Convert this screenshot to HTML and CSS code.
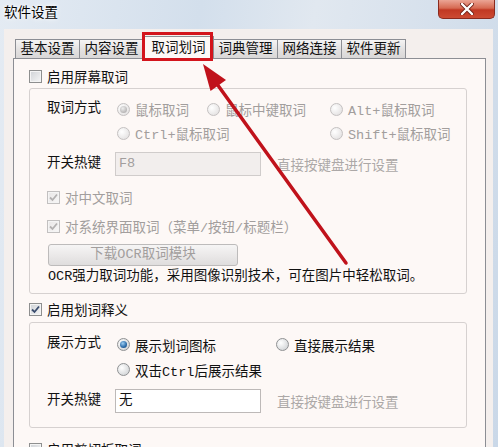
FILE: index.html
```html
<!DOCTYPE html>
<html lang="zh-CN">
<head>
    <meta charset="UTF-8">
    <title>软件设置</title>
    <link rel="stylesheet" href="styles.css">
</head>
<body>
    <div class="window">
        <div class="titlebar">
            <span class="title">软件设置</span>
            <div class="close">
                <svg width="14" height="12" viewBox="0 0 14 12">
                    <path d="M2 1 L12 11 M12 1 L2 11" stroke="#6e2118" stroke-width="4" stroke-linecap="round"/>
                    <path d="M2 1 L12 11 M12 1 L2 11" stroke="#fff" stroke-width="2.4" stroke-linecap="round"/>
                </svg>
            </div>
        </div>

        <div class="client">
            <div class="tabs">
                <div class="tab">基本设置</div>
                <div class="tab">内容设置</div>
                <div class="tab active">取词划词</div>
                <div class="tab">词典管理</div>
                <div class="tab">网络连接</div>
                <div class="tab">软件更新</div>
            </div>

            <div class="page">
                <div class="check-row">
                    <span class="cb"></span>启用屏幕取词
                </div>

                <div class="group group-screen">
                    <div class="opts">
                        <span class="lbl">取词方式</span>
                        <div class="grid grid-screen">
                            <span class="opt dis"><span class="rb dis on"></span>鼠标取词</span>
                            <span class="opt dis"><span class="rb dis"></span>鼠标中键取词</span>
                            <span class="opt dis"><span class="rb dis"></span>Alt+鼠标取词</span>
                            <span class="opt dis"><span class="rb dis"></span>Ctrl+鼠标取词</span>
                            <span></span>
                            <span class="opt dis"><span class="rb dis"></span>Shift+鼠标取词</span>
                        </div>
                    </div>
                    <div class="hotkey">
                        <span class="lbl">开关热键</span>
                        <div class="field disabled">F8</div>
                        <span class="hint">直接按键盘进行设置</span>
                    </div>
                    <div class="sub-check dis first">
                        <span class="cb dis">
                            <svg width="11" height="11" viewBox="0 0 11 11"><path d="M2 5.5 L4.5 8 L9 2.5" fill="none" stroke="#b3b1b1" stroke-width="1.8"/></svg>
                        </span>对中文取词
                    </div>
                    <div class="sub-check dis">
                        <span class="cb dis">
                            <svg width="11" height="11" viewBox="0 0 11 11"><path d="M2 5.5 L4.5 8 L9 2.5" fill="none" stroke="#b3b1b1" stroke-width="1.8"/></svg>
                        </span>对系统界面取词（菜单/按钮/标题栏）
                    </div>
                    <div class="btn">下载OCR取词模块</div>
                    <div class="desc">OCR强力取词功能，采用图像识别技术，可在图片中轻松取词。</div>
                </div>

                <div class="check-row mid">
                    <span class="cb">
                        <svg width="11" height="11" viewBox="0 0 11 11"><path d="M2 5.5 L4.5 8 L9 2.5" fill="none" stroke="#3b4d6e" stroke-width="1.8"/></svg>
                    </span>启用划词释义
                </div>

                <div class="group group-mark">
                    <div class="opts">
                        <span class="lbl">展示方式</span>
                        <div class="grid grid-mark">
                            <span class="opt"><span class="rb on"></span>展示划词图标</span>
                            <span class="opt"><span class="rb"></span>直接展示结果</span>
                            <span class="opt"><span class="rb"></span>双击Ctrl后展示结果</span>
                        </div>
                    </div>
                    <div class="hotkey">
                        <span class="lbl">开关热键</span>
                        <div class="field">无</div>
                        <span class="hint">直接按键盘进行设置</span>
                    </div>
                </div>

                <div class="check-row last">
                    <span class="cb"></span>启用剪切板取词
                </div>
            </div>
        </div>

        <div class="highlight"></div>
        <svg class="arrow" width="498" height="447" viewBox="0 0 498 447">
            <line x1="217" y1="84" x2="346" y2="263" stroke="#c0121b" stroke-width="3.5" stroke-linecap="round"/>
            <polygon points="203,64 210.5,91 226,80" fill="#c0121b"/>
        </svg>
    </div>
</body>
</html>
```

FILE: styles.css
```css
body {
    margin: 0;
    font-family: "Liberation Mono", "Noto Sans CJK SC", monospace;
    font-size: 13.5px;
    color: #111;
}

.window {
    position: relative;
    width: 498px;
    height: 447px;
    overflow: hidden;
    background: linear-gradient(100deg, #e4ebf3 0%, #d3dfec 35%, #e1e8f0 55%, #cad8e8 100%);
}

.titlebar {
    height: 29px;
    display: flex;
    justify-content: space-between;
    align-items: flex-start;
}

.title {
    padding: 5px 0 0 4px;
    line-height: 17px;
    color: #000;
    text-shadow: 0 0 6px #fff, 0 0 3px #fff;
}

.close {
    width: 57px;
    height: 19px;
    margin-right: 3px;
    box-sizing: border-box;
    border: 1px solid #8a2a1e;
    border-top: none;
    border-radius: 0 0 5px 5px;
    background: linear-gradient(#eba595, #d66a52 45%, #c13823 55%, #cc4b33);
    display: flex;
    align-items: center;
    justify-content: center;
}

.client {
    margin-left: 4px;
    width: 489px;
    height: 418px;
    box-sizing: border-box;
    padding: 7px 7px 0 9px;
    background: #f4efed;
}

/* tabs */
.tabs {
    display: flex;
    align-items: flex-end;
    height: 22px;
    padding-left: 2px;
}

.tab {
    width: 65px;
    height: 19px;
    box-sizing: border-box;
    margin-left: -1px;
    border: 1px solid #8c8e94;
    border-bottom: none;
    background: linear-gradient(#f5f4f4, #e4e2e2 50%, #d9d7d7);
    display: flex;
    align-items: center;
    justify-content: center;
    line-height: 17px;
}

.tab:first-child {
    margin-left: 0;
}

.tab.active {
    position: relative;
    z-index: 2;
    width: 71px;
    height: 23px;
    margin-bottom: -1px;
    padding-top: 1px;
    background: #fdf8f6;
}

.page {
    position: relative;
    z-index: 1;
    height: 400px;
    box-sizing: border-box;
    padding-top: 8px;
    border: 1px solid #8c8e94;
    background: #fdf8f6;
}

/* checkboxes and radios */
.check-row {
    display: flex;
    align-items: center;
    height: 18px;
    margin-left: 15px;
}

.check-row.mid {
    margin-top: 6px;
}

.check-row.last {
    margin-top: 12px;
}

.cb {
    flex: none;
    width: 13px;
    height: 13px;
    box-sizing: border-box;
    margin-right: 5px;
    border: 1px solid #8e8f8f;
    box-shadow: inset 0 0 0 1px #f4f4f4;
    background: linear-gradient(135deg, #cfd2d6, #f6f6f6);
    display: flex;
    align-items: center;
    justify-content: center;
}

.cb.dis {
    border-color: #c2c0c0;
    background: linear-gradient(135deg, #e8e6e6, #f8f7f7);
}

.rb {
    flex: none;
    width: 13px;
    height: 13px;
    box-sizing: border-box;
    margin-right: 5px;
    border: 1px solid #8f9193;
    border-radius: 50%;
    background: radial-gradient(circle at 35% 35%, #fff, #d6d8da 75%);
    display: flex;
    align-items: center;
    justify-content: center;
}

.rb.dis {
    border-color: #c4c1c1;
    background: radial-gradient(circle at 35% 35%, #fff, #e6e4e4 75%);
}

.rb.on::after {
    content: "";
    width: 7px;
    height: 7px;
    border-radius: 50%;
    background: radial-gradient(circle at 40% 35%, #9ccdf2, #2a6aa8 60%, #173f6e);
}

.rb.dis.on::after {
    background: radial-gradient(circle at 40% 35%, #eeeeee, #b8b6b6 70%);
}

/* group boxes */
.group {
    margin: 3px 18px 0 15px;
    padding: 8px 0 7px 17px;
    border: 1px solid #d6d1d0;
    border-radius: 3px;
}

.group-mark {
    margin-top: 4px;
    padding: 9px 0 14px 17px;
}

.opts {
    display: flex;
}

.lbl {
    flex: none;
    width: 70px;
    line-height: 24px;
}

.grid {
    display: grid;
    grid-auto-rows: 24px;
}

.grid-screen {
    grid-template-columns: 90px 123px auto;
}

.grid-mark {
    grid-template-columns: 159px auto;
    grid-auto-rows: 25px;
}

.opt {
    display: flex;
    align-items: center;
    white-space: nowrap;
}

.dis {
    color: #a29e9d;
}

.hotkey {
    display: flex;
    align-items: center;
    margin-top: 7px;
}

.hotkey .lbl {
    width: 68px;
}

.field {
    width: 146px;
    height: 24px;
    box-sizing: border-box;
    padding-left: 3px;
    border: 1px solid #bdb9b8;
    background: #fff;
    line-height: 22px;
}

.field.disabled {
    border-color: #d0cccb;
    background: #f2eeed;
    color: #a29e9d;
}

.hint {
    margin-left: 16px;
    color: #aca8a7;
}

.sub-check {
    display: flex;
    align-items: center;
    height: 20px;
    margin-top: 9px;
}

.sub-check.first {
    margin-top: 11px;
}

.btn {
    width: 190px;
    height: 22px;
    box-sizing: border-box;
    margin: 8px 0 0 1px;
    border: 1px solid #bdbbbb;
    border-radius: 3px;
    background: linear-gradient(#f6f5f5, #ebe9e9 50%, #dfdddd);
    color: #a29e9d;
    text-align: center;
    line-height: 20px;
}

.desc {
    margin: 2px 0 0 1px;
    line-height: 18px;
    white-space: nowrap;
}

/* annotation drawn over the dialog */
.highlight {
    position: absolute;
    left: 142px;
    top: 32px;
    width: 71px;
    height: 29px;
    box-sizing: border-box;
    border: 3px solid #d3141c;
    z-index: 5;
}

.arrow {
    position: absolute;
    left: 0;
    top: 0;
    z-index: 6;
    pointer-events: none;
}
```
